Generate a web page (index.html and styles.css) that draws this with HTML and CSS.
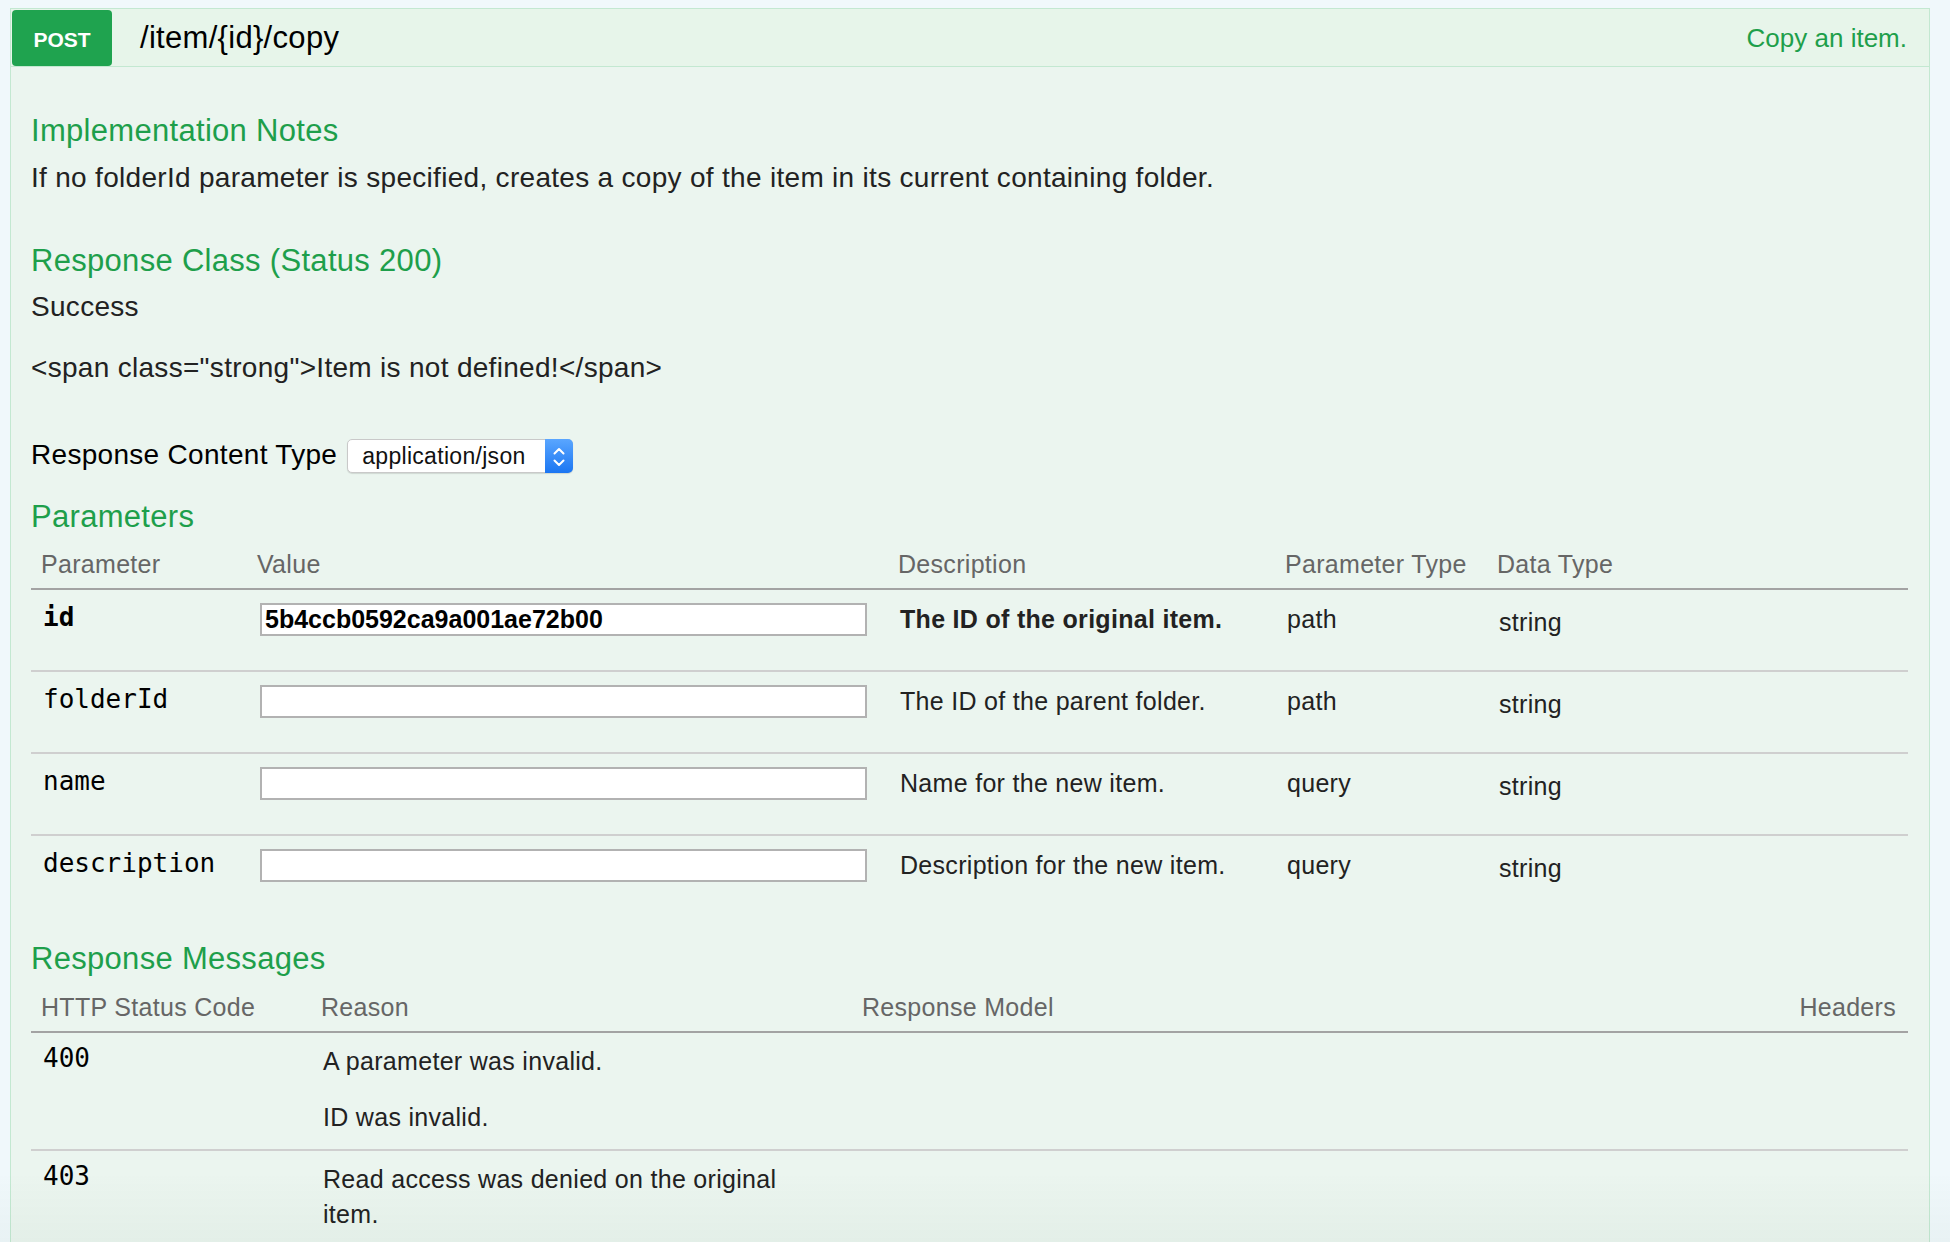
FILE: index.html
```html
<!DOCTYPE html>
<html lang="en">
<head>
<meta charset="utf-8">
<title>POST /item/{id}/copy</title>
<link rel="stylesheet" href="styles.css">
</head>
<body>
<div class="op">
  <div class="op-head">
    <span class="method">POST</span>
    <span class="path">/item/{id}/copy</span>
    <span class="summary">Copy an item.</span>
  </div>
  <div class="op-body">
    <h4 class="sec-title t-notes">Implementation Notes</h4>
    <p class="text notes">If no folderId parameter is specified, creates a copy of the item in its current containing folder.</p>

    <h4 class="sec-title t-class">Response Class (Status 200)</h4>
    <p class="text success">Success</p>
    <p class="text span-line">&lt;span class="strong"&gt;Item is not defined!&lt;/span&gt;</p>

    <div class="ctype">
      <span class="ctype-label">Response Content Type</span>
      <div class="select">
        <span class="select-value">application/json</span>
        <span class="select-btn">
          <svg width="28" height="32" viewBox="0 0 28 32" aria-hidden="true">
            <polyline points="9.5,13.5 14,9 18.5,13.5" fill="none" stroke="#fff" stroke-width="2" stroke-linecap="round" stroke-linejoin="round"/>
            <polyline points="9.5,20.5 14,25 18.5,20.5" fill="none" stroke="#fff" stroke-width="2" stroke-linecap="round" stroke-linejoin="round"/>
          </svg>
        </span>
      </div>
    </div>

    <h4 class="sec-title t-params">Parameters</h4>
    <div class="params">
      <div class="prow phead">
        <div class="th">Parameter</div>
        <div class="th">Value</div>
        <div class="th">Description</div>
        <div class="th">Parameter Type</div>
        <div class="th">Data Type</div>
      </div>
      <div class="prow pbody">
        <div class="td code required">id</div>
        <div class="td val"><input class="pinput required" type="text" value="5b4ccb0592ca9a001ae72b00"></div>
        <div class="td desc required">The ID of the original item.</div>
        <div class="td ptype">path</div>
        <div class="td dtype">string</div>
      </div>
      <div class="prow pbody">
        <div class="td code">folderId</div>
        <div class="td val"><input class="pinput" type="text" value=""></div>
        <div class="td desc">The ID of the parent folder.</div>
        <div class="td ptype">path</div>
        <div class="td dtype">string</div>
      </div>
      <div class="prow pbody">
        <div class="td code">name</div>
        <div class="td val"><input class="pinput" type="text" value=""></div>
        <div class="td desc">Name for the new item.</div>
        <div class="td ptype">query</div>
        <div class="td dtype">string</div>
      </div>
      <div class="prow pbody last">
        <div class="td code">description</div>
        <div class="td val"><input class="pinput" type="text" value=""></div>
        <div class="td desc">Description for the new item.</div>
        <div class="td ptype">query</div>
        <div class="td dtype">string</div>
      </div>
    </div>

    <h4 class="sec-title t-resp">Response Messages</h4>
    <div class="resp">
      <div class="rrow rhead">
        <div class="th">HTTP Status Code</div>
        <div class="th">Reason</div>
        <div class="th">Response Model</div>
        <div class="th right">Headers</div>
      </div>
      <div class="rrow rbody">
        <div class="td rcode">400</div>
        <div class="td reason"><p>A parameter was invalid.</p><p>ID was invalid.</p></div>
        <div class="td"></div>
        <div class="td"></div>
      </div>
      <div class="rrow rbody">
        <div class="td rcode">403</div>
        <div class="td reason"><p>Read access was denied on the original item.</p></div>
        <div class="td"></div>
        <div class="td"></div>
      </div>
    </div>
  </div>
</div>
</body>
</html>
```

FILE: styles.css
```css
html, body {
  margin: 0;
  padding: 0;
}

body {
  padding: 8px 0 0 10px;
  background: #f0f8fb;
  font-family: "Liberation Sans", Arial, Helvetica, sans-serif;
  color: #222;
  overflow: hidden;
}

body::after {
  content: "";
  position: fixed;
  left: 0;
  right: 0;
  bottom: 0;
  height: 70px;
  background: linear-gradient(to bottom, rgba(30, 80, 50, 0), rgba(30, 80, 50, 0.035));
  pointer-events: none;
}

.op {
  width: 1920px;
  box-sizing: border-box;
  border: 1px solid #c3e8d1;
  border-bottom: none;
}

/* header */
.op-head {
  display: flex;
  align-items: center;
  background: #e7f5ea;
  border-bottom: 1px solid #c3e8d1;
  padding: 1px 22px 0 1px;
}

.method {
  width: 100px;
  height: 56px;
  box-sizing: border-box;
  padding-top: 3px;
  display: flex;
  align-items: center;
  justify-content: center;
  background: #1fa34f;
  color: #fff;
  font-weight: bold;
  font-size: 21px;
  border-radius: 4px;
}

.path {
  margin-left: 28px;
  font-size: 31px;
  letter-spacing: 0.3px;
  color: #000;
}

.summary {
  margin-left: auto;
  font-size: 26px;
  color: #1e9f4b;
}

/* body */
.op-body {
  display: flex;
  flex-direction: column;
  background: #ebf5ef;
  padding: 0 21px 40px 20px;
}

.sec-title {
  margin: 0;
  font-size: 31px;
  line-height: 36px;
  font-weight: normal;
  letter-spacing: 0.3px;
  color: #1e9f4b;
}

.text {
  margin: 0;
  font-size: 28px;
  line-height: 34px;
  letter-spacing: 0.3px;
  color: #222;
}

.t-notes { margin-top: 46px; }
.notes { margin-top: 12px; }
.t-class { margin-top: 48px; }
.success { margin-top: 11px; }
.span-line { margin-top: 27px; }

.ctype {
  margin-top: 54px;
  display: flex;
  align-items: baseline;
}

.ctype-label {
  font-size: 28px;
  line-height: 30px;
  letter-spacing: 0.3px;
  color: #000;
}

.select {
  margin-left: 10px;
  width: 226px;
  height: 34px;
  box-sizing: border-box;
  display: inline-flex;
  align-items: baseline;
  background: #fff;
  border: 1px solid #c9c9c9;
  border-radius: 5px;
  box-shadow: 0 1px 1px rgba(0, 0, 0, 0.12);
  position: relative;
}

.select-value {
  padding-left: 14px;
  font-size: 23px;
  line-height: 32px;
  letter-spacing: 0.3px;
  color: #111;
}

.select-btn {
  position: absolute;
  top: -1px;
  right: -1px;
  width: 28px;
  height: 34px;
  border-radius: 0 5px 5px 0;
  background: linear-gradient(to bottom, #5aa6ff, #1b76f2);
  display: flex;
  align-items: center;
  justify-content: center;
}

.t-params { margin-top: 26px; }
.t-resp { margin-top: 25px; }

/* shared cell styles */
.th {
  padding: 0 10px 9px;
  font-size: 25px;
  line-height: 30px;
  letter-spacing: 0.3px;
  color: #666;
}

.th.right {
  text-align: right;
  padding-right: 12px;
}

.td {
  padding: 13px 0 0 12px;
  font-size: 25px;
  line-height: 32px;
  letter-spacing: 0.3px;
  color: #222;
}

/* parameters table */
.params {
  margin-top: 14px;
}

.prow {
  display: grid;
  grid-template-columns: 216px 641px 387px 212px 1fr;
}

.phead {
  border-bottom: 2px solid #a3a3a3;
}

.pbody {
  height: 82px;
  box-sizing: border-box;
  border-bottom: 2px solid #cfcfcf;
}

.pbody.last {
  height: 80px;
  border-bottom: none;
}

.td.code {
  font-family: "DejaVu Sans Mono", Menlo, monospace;
  font-size: 26px;
  line-height: 28px;
  letter-spacing: 0;
  color: #000;
}

.td.code.required {
  font-weight: bold;
}

.td.val {
  padding-left: 13px;
}

.pinput {
  display: block;
  width: 607px;
  height: 33px;
  box-sizing: border-box;
  margin: 0;
  padding: 0 3px;
  border: 2px solid #b2b2b2;
  border-radius: 0;
  background: #fff;
  font-family: "Liberation Sans", Arial, sans-serif;
  font-size: 25px;
  color: #000;
  outline: none;
}

.pinput.required {
  font-weight: bold;
}

.td.desc.required {
  font-weight: bold;
  color: #222;
}

.td.dtype {
  padding-top: 16px;
}

/* response messages table */
.resp {
  margin-top: 15px;
}

.rrow {
  display: grid;
  grid-template-columns: 280px 541px 1fr auto;
}

.rhead {
  border-bottom: 2px solid #a3a3a3;
}

.rbody {
  border-bottom: 2px solid #cfcfcf;
}

.rbody .td {
  padding-top: 11px;
  padding-bottom: 14px;
}

.td.rcode {
  font-family: "DejaVu Sans Mono", Menlo, monospace;
  font-size: 26px;
  line-height: 28px;
  letter-spacing: 0;
  color: #000;
}

.td.reason {
  padding-right: 40px;
  line-height: 35px;
}

.reason p {
  margin: 0;
}

.reason p + p {
  margin-top: 21px;
}
```
